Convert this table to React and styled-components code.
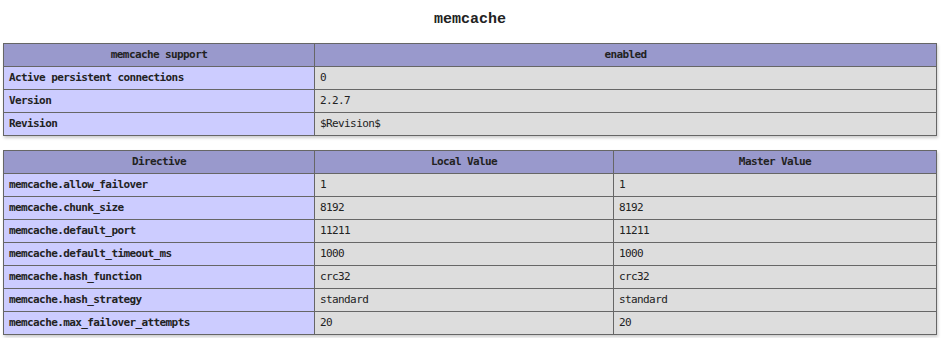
import React from 'react'
import styled, { createGlobalStyle } from 'styled-components'

const GlobalStyle = createGlobalStyle`
  body {
    margin: 0;
    background: #fff;
    color: #222;
    font-family: "DejaVu Sans Mono", "Liberation Mono", monospace;
  }
`

const support = [
  ['Active persistent connections', '0'],
  ['Version', '2.2.7'],
  ['Revision', '$Revision$'],
]

const directives = [
  ['memcache.allow_failover', '1', '1'],
  ['memcache.chunk_size', '8192', '8192'],
  ['memcache.default_port', '11211', '11211'],
  ['memcache.default_timeout_ms', '1000', '1000'],
  ['memcache.hash_function', 'crc32', 'crc32'],
  ['memcache.hash_strategy', 'standard', 'standard'],
  ['memcache.max_failover_attempts', '20', '20'],
]

const App = () => (
  <Page>
    <GlobalStyle />
    <Title>memcache</Title>
    <Table $cols="310px 621px">
      <Head>memcache support</Head>
      <Head>enabled</Head>
      {support.map(([k, v]) => (
        <React.Fragment key={k}>
          <Key>{k}</Key>
          <Value>{v}</Value>
        </React.Fragment>
      ))}
    </Table>
    <Table $cols="310px 298px 322px">
      <Head>Directive</Head>
      <Head>Local Value</Head>
      <Head>Master Value</Head>
      {directives.map(([k, local, master]) => (
        <React.Fragment key={k}>
          <Key>{k}</Key>
          <Value>{local}</Value>
          <Value>{master}</Value>
        </React.Fragment>
      ))}
    </Table>
  </Page>
)

const Page = styled.div`
  width: 934px;
  margin: 0 0 0 3px;
  padding-top: 10px;
`

const Title = styled.h2`
  margin: 0 0 13px;
  font-family: "Liberation Mono", "DejaVu Sans Mono", monospace;
  font-size: 15px;
  line-height: 20px;
  font-weight: bold;
  text-align: center;
  color: #222;
`

const Table = styled.div`
  display: grid;
  grid-template-columns: ${p => p.$cols};
  gap: 1px;
  padding: 1px;
  background: #666;
  box-shadow: 1px 2px 3px #ccc;
  margin-bottom: 14px;
`

const Cell = styled.div`
  height: 22px;
  box-sizing: border-box;
  padding: 0 5px;
  font-size: 11px;
  line-height: 22px;
  letter-spacing: -0.6px;
  white-space: nowrap;
  overflow: hidden;
`

const Head = styled(Cell)`
  background: #99c;
  font-weight: bold;
  text-align: center;
  color: #222;
`

const Key = styled(Cell)`
  background: #ccf;
  font-weight: bold;
  color: #222;
`

const Value = styled(Cell)`
  background: #ddd;
  color: #222;
`

export default App
